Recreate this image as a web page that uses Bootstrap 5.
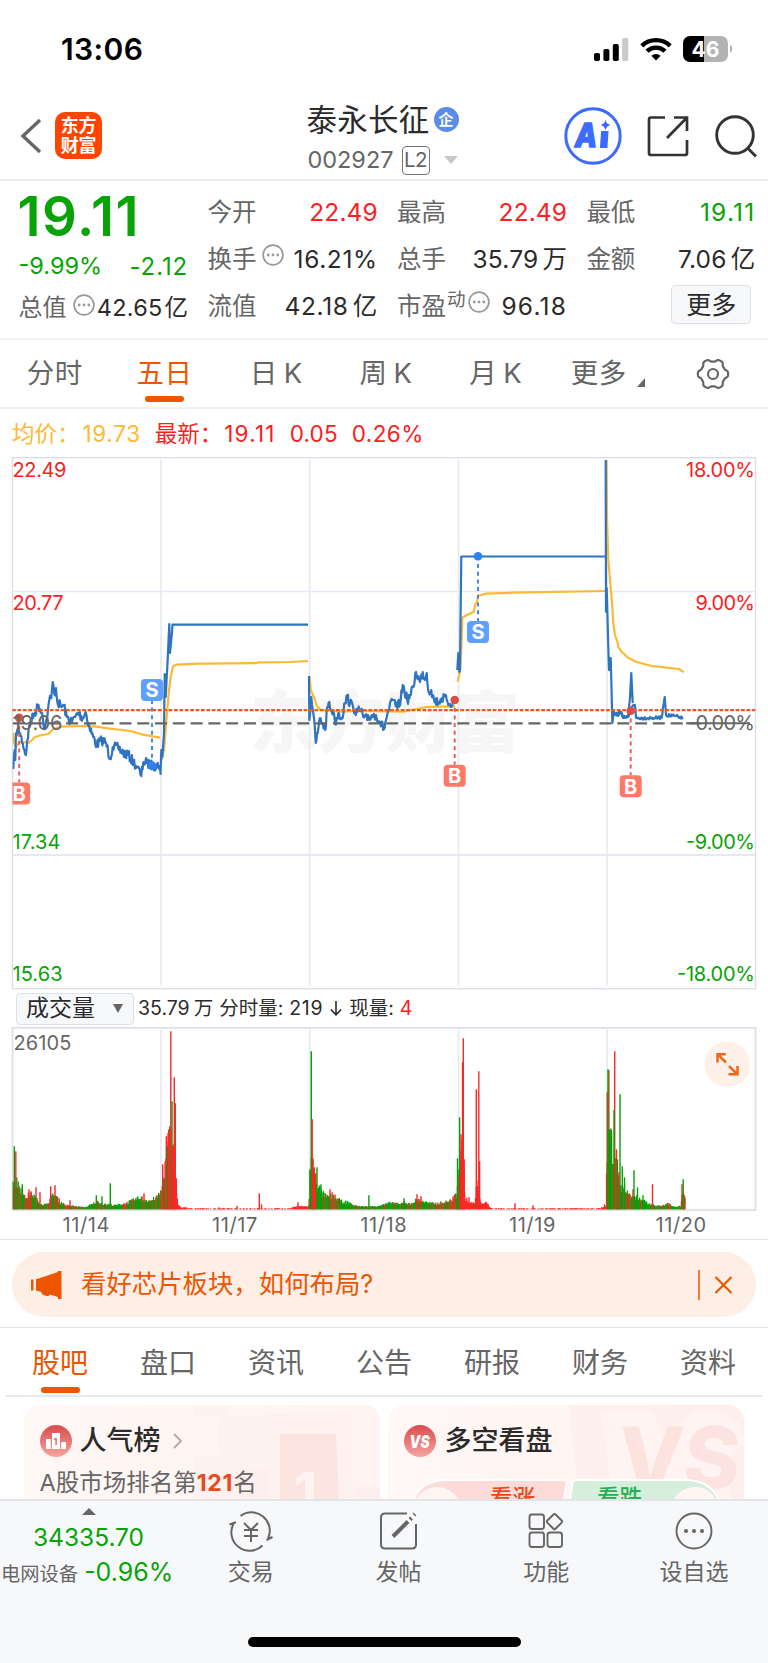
<!DOCTYPE html>
<html lang="zh-CN">
<head>
<meta charset="utf-8">
<meta name="viewport" content="width=device-width, initial-scale=1">
<title>泰永长征 002927</title>
<link href="https://cdn.jsdelivr.net/npm/bootstrap@5.3.0/dist/css/bootstrap.min.css" rel="stylesheet">
<style>
:root{--up:#fb2022;--down:#07a307;--brand:#ee5500;--ink:#2b2b2b;--dim:#666;--rule:#e7e8ee}
body{font-family:Inter,"Noto Sans CJK SC",sans-serif;color:var(--ink);background:#fff;line-height:1.2}
.app{width:768px;height:1663px;overflow:hidden}
.app svg{display:block;flex:none}
.up{color:var(--up)}.down{color:var(--down)}.dim{color:var(--dim)}.brand{color:var(--brand)}
.ls-2{letter-spacing:.2px!important}.ls-6{letter-spacing:.65px!important}.ls-12{letter-spacing:1.2px!important}
.status{height:98px;padding:0 34px 0 61px}
.clock{font-size:30px;font-weight:600;letter-spacing:.4px;color:#000}
.topbar{height:83px;padding:0 11px 6px 20px;border-bottom:2px solid #ededef}
.side{width:238px}
.logo{width:47px;height:47px;border-radius:10px;background:#ff4400;color:#fff;font-size:18px;font-weight:700;line-height:19.5px;letter-spacing:-.3px}
.stock{margin-left:-12px;padding-top:5px}
.title{font-size:30.5px;letter-spacing:.3px;line-height:36px}
.qi{width:25px;height:25px;background:#5b8cea;color:#fff;font-size:15px;font-weight:700}
.code{font-size:23.5px;letter-spacing:0}
.lv{width:28px;height:29px;border:1.5px solid #777;border-radius:4px;font-size:20.5px;letter-spacing:-.5px}
.quote{display:grid;grid-template-columns:169.6px 170.4px 170px 169px;column-gap:19.3px;padding:8px 0 0 18.5px;height:159px;border-bottom:2px solid #f2f2f4}
.qrow{height:47.2px;font-size:24.5px;white-space:nowrap}
.qrow .v{letter-spacing:.1px}
.big{font-size:54.5px;font-weight:600;height:56px;letter-spacing:1.5px;margin-left:-1px}
.more{width:80px;height:39px;border:1.5px solid #dfe1e8;border-radius:4px;background:#f7f8fa;font-size:25px}
.tabs{height:69px;border-bottom:2px solid #f2f2f4;font-size:27.5px;letter-spacing:.5px}
.tabs>div{width:14.2857%}
.subtabs>div{flex:1 1 0}
.tabs .kline{padding-left:4px}
.tabs .kline span{margin-left:6px}
.bar-u{width:39px;height:6px;border-radius:3px;background:var(--brand);left:50%;margin-left:-19.5px}
.legend{height:48px;padding-left:12px;font-size:22.5px}
.tools{height:37px;padding-left:16px;font-size:19.5px}
.pick{width:118px;height:32px;border:1.5px solid #dfe1e8;border-radius:4px;background:#f7f8fa;font-size:23px;padding:0 10px 0 9px}
.dates{height:28px;margin-left:12px;width:744px;font-size:20px;letter-spacing:.6px}
.dates div{width:148.7px;text-align:center}
.notice{height:65px;margin:12px 12px 10px;border-radius:33px;background:#fdeee6;color:var(--brand);font-size:25.4px;padding:0 24px 0 19px}
.subtabs{height:69px;margin:0 6px;border-bottom:2px solid var(--rule);font-size:28px}
.subtabs>div{padding-top:5px}
.panels{height:102px;padding:8px 24px 0;gap:8px;overflow:hidden}
.panel{flex:1 1 0;height:120px;border-radius:16px;background:linear-gradient(100deg,#fff8f6,#fff2f0);overflow:hidden;padding:20px 15.5px}
.panel .hd{font-size:27px;font-weight:500;line-height:32px}
.panel .deco{right:0;top:0}
.rank{font-size:23.5px;margin-top:12px;line-height:28px;white-space:nowrap}
.dock{height:165px;background:#f7f8fa;border-top:2px solid #e3e4e7}
.dock .item{width:147.7px;padding-top:9px;font-size:23px}
.index{width:177px;padding-top:7px}
.home{width:273px;height:10px;border-radius:5px;background:#000}
</style>
</head>
<body>
<div class="app">
  <div class="status d-flex justify-content-between align-items-center">
    <div class="clock">13:06</div>
    <div class="d-flex align-items-center" style="gap:11px">
      <svg width="35" height="23" viewBox="0 0 35 23"><g><rect x="0" y="15" width="6" height="8" rx="1.8"/><rect x="9.4" y="11" width="6" height="12" rx="1.8"/><rect x="18.8" y="6" width="6" height="17" rx="1.8"/><rect x="28.2" y="0" width="6" height="23" rx="1.8" fill="#c9c9c9"/></g></svg>
      <svg width="32" height="24" viewBox="0 0 32 24" fill="none" stroke="#000" stroke-width="4.4"><path d="M1.8 8.8a20.5 20.5 0 0 1 28.4 0"/><path d="M7 14.2a13 13 0 0 1 18 0"/><path d="M16 23.5l-4.6-4.7a6.5 6.5 0 0 1 9.2 0z" fill="#000" stroke="none"/></svg>
      <svg width="51" height="26" viewBox="0 0 51 26"><path d="M7 0h14v26H7a7 7 0 0 1-7-7V7a7 7 0 0 1 7-7z"/><path d="M21 0h17a7 7 0 0 1 7 7v12a7 7 0 0 1-7 7H21z" fill="#b3b3b3"/><path d="M47 9c3 1.500 3 6.500 0 8z" fill="#b3b3b3"/><text x="22.500" y="20.500" text-anchor="middle" font-size="21" font-weight="700" fill="#fff" textLength="28">46</text></svg>
    </div>
  </div>

  <div class="topbar d-flex justify-content-between align-items-center">
    <div class="side d-flex align-items-center">
      <svg width="22" height="36" viewBox="0 0 22 36" fill="none" stroke="#666" stroke-width="3.4"><path d="M20 2L3 18l17 16"/></svg>
      <div class="logo d-flex align-items-center justify-content-center text-center" style="margin-left:13px">东方<br>财富</div>
    </div>
    <div class="text-center stock">
      <div class="d-flex align-items-center justify-content-center" style="gap:4px"><span class="title">泰永长征</span><span class="qi rounded-circle d-flex align-items-center justify-content-center">企</span></div>
      <div class="d-flex align-items-center dim" style="margin:8px 0 0 1px"><span class="code">002927</span><span class="lv d-flex align-items-center justify-content-center" style="margin:0 14px 0 8px">L2</span><svg width="14" height="8"><path d="M0 0h14L7 8z" fill="#c8c8c8"/></svg></div>
    </div>
    <div class="side d-flex align-items-center justify-content-end">
      <svg width="58" height="58" viewBox="0 0 58 58"><circle cx="29" cy="29" r="27.200" fill="#fff" stroke="#3d6bff" stroke-width="3"/><text x="11" y="40" font-size="33" font-weight="800" font-style="italic" fill="#3d6bff" stroke="#3d6bff" stroke-width="1.600" textLength="22" lengthAdjust="spacingAndGlyphs">A</text><path d="M38 25h5.500l-1 15H37z" fill="#3d6bff" stroke="#3d6bff" stroke-width="2"/><path d="M41.500 12.500q.8 4.700 5 5.500-4.200.8-5 5.500-.8-4.700-5-5.500 4.200-.8 5-5.500z" fill="#3d6bff"/></svg>
      <svg width="42" height="42" viewBox="0 0 42 42" fill="none" stroke="#333" stroke-width="2.700" style="margin:0 26px 0 25px"><path d="M18 2.500H4q-2 0-2 2V38q0 2 2 2h34q2 0 2-2V25M27 2.500h13V16M40 2.500L20 23"/></svg>
      <svg width="42" height="44" viewBox="0 0 42 44" fill="none" stroke="#333" stroke-width="2.900"><circle cx="20" cy="21" r="18.300"/><path d="M33 34.500l8 8"/></svg>
    </div>
  </div>

  <div class="quote">
    <div>
      <div class="big down d-flex align-items-center">19.11</div>
      <div class="down d-flex justify-content-between" style="font-size:24px;height:43.500px;line-height:42px"><span style="font-size:23.500px">-9.99%</span><span style="padding-top:1px;letter-spacing:.900px">-2.12</span></div>
      <div class="d-flex align-items-center" style="height:40px;font-size:23.500px;white-space:nowrap"><span class="dim" style="font-size:24px">总值</span><svg width="22" height="22" viewBox="0 0 22 22" style="margin:-7px 2px 0 6px"><use href="#dots"/></svg><span class="ms-auto ls-2">42.65<span style="margin-left:2px">亿</span></span></div>
    </div>
    <div>
      <div class="qrow d-flex align-items-center justify-content-between"><span class="dim">今开</span><span class="v up">22.49</span></div>
      <div class="qrow d-flex align-items-center"><span class="dim">换手</span><svg width="22" height="22" style="margin:-10px 0 0 6px" viewBox="0 0 22 22"><use href="#dots"/></svg><span class="v ls-6 ms-auto">16.21%</span></div>
      <div class="qrow d-flex align-items-center justify-content-between"><span class="dim">流值</span><span class="v ls-6">42.18<span style="margin-left:4px">亿</span></span></div>
    </div>
    <div>
      <div class="qrow d-flex align-items-center justify-content-between"><span class="dim">最高</span><span class="v up">22.49</span></div>
      <div class="qrow d-flex align-items-center justify-content-between"><span class="dim">总手</span><span class="v ls-2">35.79<span style="margin-left:4px">万</span></span></div>
      <div class="qrow d-flex align-items-center"><span class="dim">市盈</span><span class="dim" style="font-size:18.500px;margin:-16px 1px 0 1px">动</span><svg width="22" height="22" style="margin:-10px 0 0 1px" viewBox="0 0 22 22"><use href="#dots"/></svg><span class="v ls-12 ms-auto">96.18</span></div>
    </div>
    <div>
      <div class="qrow d-flex align-items-center justify-content-between"><span class="dim">最低</span><span class="v ls-12 down">19.11</span></div>
      <div class="qrow d-flex align-items-center justify-content-between"><span class="dim">金额</span><span class="v ls-2">7.06<span style="margin-left:4px">亿</span></span></div>
      <div class="qrow d-flex align-items-center justify-content-end"><div class="more d-flex align-items-center justify-content-center" style="margin:-4px 4px 0 0">更多</div></div>
    </div>
  </div>

  <div class="tabs d-flex align-items-center dim">
    <div class="text-center">分时</div>
    <div class="text-center brand position-relative h-100 d-flex align-items-center justify-content-center">五日<span class="bar-u position-absolute" style="bottom:5px"></span></div>
    <div class="text-center kline">日<span>K</span></div>
    <div class="text-center kline">周<span>K</span></div>
    <div class="text-center kline">月<span>K</span></div>
    <div class="d-flex justify-content-center align-items-end" style="padding-left:9px">更多<svg width="8" height="9" style="margin:0 0 3px 10px"><path d="M8 0v9H0z" fill="#666"/></svg></div>
    <div class="d-flex justify-content-center"><svg width="34" height="32" viewBox="-17 -16 34 32" fill="none" stroke="#666" stroke-width="2.200"><path id="gear"/><circle r="5"/></svg></div>
  </div>

  <div class="legend d-flex align-items-center"><span style="color:#fdb933">均价：</span><span class="ls-6" style="color:#fdb933;margin-left:3px">19.73</span><span class="up" style="margin-left:14px">最新：</span><span class="up ls-12" style="margin-left:2px">19.11</span><span class="up ls-2" style="margin-left:14px">0.05</span><span class="up" style="margin-left:14px;letter-spacing:.4px">0.26%</span></div>

  <svg id="price" width="768" height="533" viewBox="0 457 768 533" font-size="20">
    <defs>
      <g id="dots" fill="none"><circle cx="11" cy="11" r="9.900" stroke="#999" stroke-width="1.700"/><g fill="#999"><circle cx="6.200" cy="11" r="1.400"/><circle cx="11" cy="11" r="1.400"/><circle cx="15.800" cy="11" r="1.400"/></g></g>
      <clipPath id="clip"><rect x="12.500" y="457" width="743" height="532"/></clipPath>
    </defs>
    <text x="250" y="747" font-size="67" font-weight="900" fill="#f6f6f6" textLength="270">东方财富</text>
    <g stroke="#e6e9f1" stroke-width="1.600"><path d="M161 460V986M309.700 460V986M458.500 460V986M607.200 460V986M12 591.500H756"/><path d="M12 855H756" stroke-width="2"/></g>
    <rect x="12.500" y="457.700" width="743" height="531" fill="none" stroke="#dcdee6" stroke-width="1.400"/>
    <g fill="#fb2022"><text x="12.500" y="477" textLength="54">22.49</text><text x="12.500" y="609.500" textLength="51">20.77</text><text x="755" y="477" text-anchor="end" textLength="69">18.00%</text><text x="755" y="609.500" text-anchor="end" textLength="59.500">9.00%</text></g>
    <g fill="#07a307"><text x="12.500" y="849" textLength="48">17.34</text><text x="12.500" y="981" textLength="50">15.63</text><text x="755" y="849" text-anchor="end" textLength="69">-9.00%</text><text x="755" y="981" text-anchor="end" textLength="78">-18.00%</text></g>
    <g clip-path="url(#clip)">
      <g id="avg" fill="none" stroke="#fdb933" stroke-width="2.200" stroke-linejoin="round"></g>
      <g id="line" fill="none" stroke="#2f74c0" stroke-width="2.200" stroke-linejoin="round"></g>
      <path d="M12 710.200H756" stroke="#ee5a1c" stroke-width="2.200" stroke-dasharray="3.800 1.600"/>
      <path d="M12.800 723.300H704" stroke="#666" stroke-width="2.300" stroke-dasharray="12 5.780"/><path d="M686 723.300H750" stroke="#666" stroke-width="2"/>
      <g id="marks"></g>
    </g>
    <g fill="#666"><text x="12.500" y="729.500" textLength="50">19.06</text><text x="755" y="729.500" text-anchor="end" textLength="59.500">0.00%</text></g>
  </svg>

  <div class="tools d-flex align-items-center"><div class="pick d-flex align-items-center justify-content-between">成交量<svg width="10" height="9"><path d="M0 0h10L5 9z" fill="#666"/></svg></div><div class="d-flex align-items-center" style="padding-top:1px"><span style="margin-left:4px">35.79<span style="margin-left:4px">万</span></span><span style="margin-left:6px">分时量:</span><span class="ls-6" style="margin-left:6px">219</span><svg width="12" height="15" viewBox="0 0 12 15" fill="none" stroke="#2b2b2b" stroke-width="1.600" style="margin:0 7px"><path d="M6 0v13.500M.8 8.500L6 13.800l5.200-5.300"/></svg><span>现量:</span><span class="up" style="margin-left:6px">4</span></div></div>

  <svg id="vol" width="768" height="184" viewBox="0 1026.500 768 184">
    <path d="M161 1029V1209M309.700 1029V1209M458.500 1029V1209M607.200 1029V1209" stroke="#e6e9f1" stroke-width="1.600"/>
    <rect x="12.500" y="1027.300" width="743" height="182.300" fill="none" stroke="#dcdee6" stroke-width="1.600"/>
    <text x="13.500" y="1049" font-size="20" fill="#666" textLength="58">26105</text>
    <g id="bars"></g>
    <circle cx="727.300" cy="1063.700" r="22.700" fill="#fdf1ea"/>
    <path d="M717.500 1062v-8.300h8.300M717.500 1053.700l8.500 8.300M737.500 1065.500v8.300h-9M737.500 1073.800l-8.500-8.300" fill="none" stroke="#f0661b" stroke-width="2.500"/>
  </svg>
  <div class="dates d-flex align-items-center dim"><div>11/14</div><div>11/17</div><div>11/18</div><div>11/19</div><div>11/20</div></div>
  <div style="border-top:1px solid #e2e4ea"></div>

  <div class="notice d-flex align-items-center">
    <svg width="31" height="28" viewBox="0 0 31 28" fill="#ee5500"><path d="M0 8.500h2.500v11H0zM5 8l2-.3L27 1V0h3.500v28H27v-2l-8-2.500q-1 2-3.500 1.500l-4-1.500-1.500-2.700L5 19.500z"/></svg>
    <span style="margin-left:19px">看好芯片板块，如何布局?</span>
    <svg class="ms-auto" width="34" height="30" viewBox="0 0 34 30" stroke="#ee5500" fill="none"><path d="M1 0v30" stroke-width="1.500"/><path d="M17.500 7l16 16M33.500 7l-16 16" stroke-width="2.200"/></svg>
  </div>
  <div style="border-top:1px solid #e2e4ea"></div>
  <div class="subtabs d-flex align-items-center text-center dim">
    <div class="position-relative h-100 d-flex align-items-center justify-content-center brand">股吧<span class="bar-u position-absolute" style="bottom:2px"></span></div><div>盘口</div><div>资讯</div><div>公告</div><div>研报</div><div>财务</div><div>资料</div>
  </div>

  <div class="panels d-flex">
    <div class="panel position-relative">
      <svg class="deco position-absolute" width="190" height="96" viewBox="0 0 190 96"><g fill="#fceeec"><path d="M4 0h186v96H4z" opacity=".35"/><path d="M52 65h28v31H52zM166 82h24v14h-24z" opacity=".9"/></g><path d="M38 0h38l-2 10H29v40H4V12h34zM74 9h88v73h28V0H74z" fill="#fff5f3" opacity=".8"/><path d="M90 29h56l3 67H90z" fill="#fce4e1"/><text x="104" y="105" font-size="52" font-weight="800" fill="#fff3f1">1</text></svg>
      <div class="hd d-flex align-items-center position-relative"><svg width="32" height="32" viewBox="0 0 32 32"><defs><linearGradient id="rd" x2="0" y2="1"><stop stop-color="#d94b4c"/><stop offset="1" stop-color="#f6a5a0"/></linearGradient></defs><circle cx="16" cy="16" r="16" fill="url(#rd)"/><path d="M12 8h8v16h-8zM6 14h4.800v10H6zM21.200 17H26v7h-4.800z" fill="#fff"/><text x="13.500" y="19.500" font-size="9" font-weight="700" fill="#e0605e">1</text></svg><span style="margin-left:8px">人气榜</span><svg width="9" height="16" viewBox="0 0 9 16" fill="none" stroke="#aaa" stroke-width="1.800" style="margin-left:12px"><path d="M1 1l7 7-7 7"/></svg></div>
      <div class="rank dim position-relative">A股市场排名第<b style="color:#e8491d;letter-spacing:.700px;font-size:23px">121</b>名</div>
    </div>
    <div class="panel position-relative">
      <svg class="deco position-absolute" width="176" height="96" viewBox="0 0 176 96"><path d="M0 0h176v96H12z" fill="#fdecea" opacity=".6"/><path d="M33 6h50l14 24 30-24q50-2 49 32l-20 22 8 36H45z" fill="#fff5f3" opacity=".75"/><text x="46" y="84" font-size="86" font-weight="800" fill="#fce3e0" textLength="122" lengthAdjust="spacingAndGlyphs" transform="translate(8 0) skewX(-4)">VS</text></svg>
      <div class="hd d-flex align-items-center position-relative"><svg width="32" height="32" viewBox="0 0 32 32"><circle cx="16" cy="16" r="16" fill="url(#rd)"/><text x="15.500" y="22.500" font-size="18" font-weight="900" font-style="italic" fill="#fff" text-anchor="middle" textLength="20" lengthAdjust="spacingAndGlyphs">VS</text></svg><span style="margin-left:9px">多空看盘</span></div>
      <svg class="position-relative" style="margin:21px 0 0 3px" width="318" height="50" viewBox="0 0 318 50"><path d="M0 60C0 20 12 2 40 2H160L151 60z" fill="#fddbd9" stroke="#fff" stroke-width="2"/><path d="M318 60C318 20 306 2 278 2H166L157 60z" fill="#d6efdc" stroke="#fff" stroke-width="2"/><circle cx="30" cy="33" r="24" fill="#fff6f4"/><circle cx="288" cy="33" r="24" fill="#fff6f4"/><text x="83" y="28" font-size="22.500" font-weight="500" fill="#ea4a20">看涨</text><text x="190" y="28" font-size="22.500" font-weight="500" fill="#27ae55">看跌</text></svg>
    </div>
  </div>

  <div class="dock d-flex flex-column align-items-center">
    <div class="d-flex w-100 text-center dim">
      <div class="index"><svg class="mx-auto" width="14" height="7"><path d="M7 0l7 7H0z" fill="#666"/></svg>
        <div class="down" style="font-size:24.500px;line-height:30px;margin-top:7px">34335.70</div>
        <div class="text-start" style="padding-left:1px;margin-top:5px;font-size:19.300px;white-space:nowrap;line-height:30px">电网设备<span class="down" style="font-size:25px;margin-left:6px">-0.96%</span></div>
      </div>
      <div class="item"><svg class="mx-auto" width="44" height="42" viewBox="-22 -21 44 42" fill="none" stroke="#666" stroke-width="2"><path d="M-10.500-15A18.300 18.300 0 0 1 17 7.500M21.500 6L15.500 9M11.500 14.500A18.300 18.300 0 0 1-17.300-7.500M-21.500-6.500L-15-8.800M-7-8l7 7 7-7M0-1v12M-7-1H7M-7 5H7"/></svg><div style="margin-top:7px">交易</div></div>
      <div class="item"><svg class="mx-auto" width="42" height="42" viewBox="0 0 42 42" fill="none" stroke="#666" stroke-width="2"><path d="M29 3.500H7q-4 0-4 4v27q0 4 4 4h27q4 0 4-4V14"/><path d="M15 26.500L30 11.500M32 9.500L33.500 8M36 5l1-1" stroke-width="4"/></svg><div style="margin-top:7px">发帖</div></div>
      <div class="item"><svg class="mx-auto" width="42" height="42" viewBox="0 0 42 42" fill="none" stroke="#666" stroke-width="1.900"><rect x="4.500" y="4.500" width="14.500" height="14.500" rx="2.500"/><rect x="4.500" y="22.500" width="14.500" height="14.500" rx="2.500"/><rect x="22.500" y="22.500" width="14.500" height="14.500" rx="2.500"/><rect x="23.700" y="5.800" width="11.600" height="11.600" rx="1.500" transform="rotate(45 29.500 11.600)"/></svg><div style="margin-top:7px">功能</div></div>
      <div class="item"><svg class="mx-auto" width="42" height="42" viewBox="0 0 42 42" fill="none" stroke="#666" stroke-width="1.900"><circle cx="21" cy="21" r="17.500"/><g fill="#666" stroke="none"><circle cx="13" cy="21" r="2.100"/><circle cx="21" cy="21" r="2.100"/><circle cx="29" cy="21" r="2.100"/></g></svg><div style="margin-top:7px">设自选</div></div>
    </div>
    <div class="home mt-auto" style="margin-bottom:17px"></div>
  </div>
</div>
<script src="https://cdn.jsdelivr.net/npm/bootstrap@5.3.0/dist/js/bootstrap.bundle.min.js"></script>
<script>
let seed = 7;
const rnd = () => (seed = (seed * 16807) % 2147483647) / 2147483647;
const $ = id => document.getElementById(id);
const parse = s => s.trim().split(/\s+/).map(p => p.split(',').map(Number));

// Intraday price: anchors with tick jitter between them
function ticks(s, amp) {
  const a = parse(s), out = [a[0]];
  for (let i = 1; i < a.length; i++) {
    const [x0, y0] = a[i - 1], [x1, y1] = a[i], n = Math.max(1, Math.round((x1 - x0) / .75));
    for (let k = 1; k < n; k++) out.push([x0 + (x1 - x0) * k / n, y0 + (y1 - y0) * k / n + (rnd() - .5) * 2 * amp]);
    out.push(a[i]);
  }
  return out;
}
const poly = p => `<polyline points="${p.map(q => q[0].toFixed(1) + ',' + q[1].toFixed(1)).join(' ')}"/>`;
const lines = [
  ["13.3,769 14.7,750 15.3,760 16,733 17.3,730 20,733 22.7,743 25.8,755 27.3,740 30,723 34.7,713 38.5,705 40,709 42,713 45,729 47.7,713 49.3,700 51.3,698 52.7,682 54.3,694 56,688 57.3,702 61.7,707 64,705 66.7,717 71.7,722 75,717 78.3,713 82.7,718 85.7,712 89.3,727 93.3,737 96.7,745 101.7,740 106,743 110,758 112.7,747 118.3,748 123.3,753 128.3,755 133.3,762 137.3,767 141.3,776 143.3,762 146.7,763 153,766 160,765", 5],
  ["160,765 160.5,774 161.3,750 162.3,757 164,733 164.7,674 165.7,697 167.3,667 169.3,624 170,653 172,632 172.5,624.7 308,624.7", 0],
  ["309,676 309.3,720 311.3,697 313.3,713 315.7,743 317.7,733 319.3,720 322.7,723 325.3,730 327.3,707 329.3,702 331,710 333.3,712 335,723 338.3,713 341.7,718 345,703 347.3,697 350,703 353.3,708 357.3,712 360.7,710 363.3,717 367.3,720 371.7,715 376,715 380,722 384,729 386,720 389.3,708 393.3,700 397.3,708 400.7,700 402.7,685 407.3,700 410.7,695 413.3,687 416,672 420,682 422.7,672 425,680 426.7,673 428.7,692 431.3,690 434,700 438.3,702 442,698 446.7,700 450,704 453,702", 5],
  ["457.3,670 458.3,653 459.3,672 460,670 461.3,556.5 605,556.5", 0],
  ["605.7,460 606,611.7 606.7,588 608,636.7 609,670 610.7,658 611.3,680 612.3,723 614,711.7 616,715 618,716 621,711.7 623,718 628,717 630,698 631.3,673 632.7,703", 0],
  ["613,714 621,713 623,717 628,717 632.7,706 635,705 636,718 653,718 661.7,717.7 663,707 664.7,697 666,715 680,717 683,719", 1.6]
];
$('line').innerHTML = lines.map(([s, a]) => poly(ticks(s, a))).join('');
$('avg').innerHTML = [
  "13.3,733 14,742 16,747 19.3,742 29.3,742.7 35,737 41.7,735 48.3,734 53.3,729 60,726.7 83,726 96.7,726.7 110,728.7 123,730 133,731.7 141.7,734.3 160,737.7",
  "161.3,760.7 164,750 166.7,716.7 168.7,693 170.7,676.7 173,666.7 176,664.7 200,663.7 256.7,663.2 258.7,662.3 290,662 308,661",
  "309.7,677 310.7,690 314.3,698 316.7,705.7 320.7,710 343,711.7 356.7,711 403,711.7 416.7,709 426.7,707 455,706.3",
  "457.7,681.7 460,671 461.3,650 462.3,617.7 466.7,615 473.7,612 475.3,604 477,602.7 478,596 485,593.7 513,592.7 605,591",
  "606.5,460 607,517 608.3,560 610.3,583 612.3,607 613.3,623 615,635 617.7,643 618.3,647 621.7,651.7 628,657.7 636.7,662 651.7,666 666.7,667.7 679,669 681.7,671 683.7,672"
].map(s => poly(parse(s))).join('');

// Buy / sell markers: letter, x, box centre y, dot y
$('marks').innerHTML = [['S', 152, 690, 765.5], ['B', 19.2, 793.5, 717.7], ['B', 454.7, 775.7, 700], ['S', 478, 632, 556.3], ['B', 630.7, 786.3, 710.7]].map(([t, x, y, d]) => {
  const c = t === 'S' ? '#5ea0ff' : '#ff7868', l = t === 'S' ? '#3a87f5' : '#f0564e', e = y > d ? y - 11 : y + 11;
  return `<path d="M${x} ${d}V${e}" stroke="${l}" stroke-width="1.9" stroke-dasharray="4 3.7"/><circle cx="${x}" cy="${d}" r="4.3" fill="${t === 'S' ? '#2f80f0' : '#dc4e45'}"/><rect x="${x - 11}" y="${y - 11}" width="22" height="22" rx="4" fill="${c}"/><text x="${x}" y="${y + 7.2}" text-anchor="middle" font-size="20" font-weight="700" fill="#fff">${t}</text>`;
}).join('');

// Volume: envelope [x, height] plus individual peaks
const env = parse("13,28 17,28 20,24 24,12 28,14 33,15 38,8 42,5 47,5 51,12 55,15 60,8 66,4 85,2 92,5 97,8 105,5 110,5 115,4 125,6 133,9 140,12 145,10 150,9 156,11 161,18 164,32 167,62 170,75 173,62 175,50 176.5,20 178,4 182,2 190,1 290,1 296,3 302,3 307,3 309,4 310,48 312,50 315,32 318,24 321,18 324,15 328,12 333,15 338,10 342,8 348,7 354,4 362,3 375,3 385,5 392,7 400,5 404,8 410,5 417,10 421,9 430,6 436,6 443,7 448,8 453,10 457,16 459,40 461,60 463.5,50 465,12 469,7 475,6 477,30 480,8 487,6 490,2 495,1 600,1 606,3 607,60 610,78 613,56 615,50 618,35 620,25 624,22 627,18 632,12 637,13 643,9 648,6 655,4 662,3 668,7 673,3 681,3 682,20 684,14 685.5,8");
let html = '', j = 0;
const bar = (x, h, c, w) => `<path d="M${x.toFixed(1)} 1208.8v-${h.toFixed(1)}" stroke="${c}" stroke-width="${w}"/>`;
const R = '#fb2626', G = '#069e06';
for (let x = 13.2; x < 685.5; x += .72) {
  while (env[j + 1][0] < x) j++;
  const [x0, a] = env[j], [x1, b] = env[j + 1];
  const base = a + (b - a) * (x - x0) / (x1 - x0);
  const rally = (x > 161 && x < 309) || (x > 460 && x < 606.5);
  const quiet = base < 1.6;
  if (quiet && rnd() < .35) continue;
  const h = base * (quiet ? .5 + rnd() * .8 : .7 + rnd() * .5);
  html += bar(x, h, rally ? (rnd() < .06 && !quiet ? G : R) : (rnd() < .25 ? R : G), 1.3);
}
html += ("14.3,63,g 15.8,58,r 22.3,25,g 29,20,r 31,18,r 36,22,r 40,17,r 50.7,23,r 55,24,r 70,9,r 96.3,14,g 102,13,g 110.3,26,g 144,16,r 162.7,45,r 164,30,g 166.3,73,r 167.2,62,g 168.3,68,r 169.7,83,r 170.8,178,r 172,108,g 172.8,62,r 174.3,132,r 175.3,106,r 176.3,31,r 219,2,r 237,3.5,r 259.3,16,r 261.5,5,r 298,7,r 311.3,158,g 312.2,90,r 313,50,r 314.2,42,r 315.7,36,r 317,42,g 321,25,g 330,20,r 368.9,14,g 404,11,g 417,15,r 421,13,r 453,13,r 457.5,51,g 458.7,34,r 459.6,92,g 461,75,r 461.9,70,r 462.6,147,r 463.3,171,r 464.2,50,r 469,12,r 476.3,120,r 478.8,138,r 479.6,48,r 515,6,r 533,4,r 604.5,5,r 607.2,117,r 608.9,139,r 608,140,g 609.7,80,g 611.5,76,g 614.7,158,r 614,99,g 616.5,60,r 617.4,50,g 619,37,r 620,115,g 622.3,43,g 624.5,32,g 633,20,r 634,39,g 637.5,22,g 643,14,g 652.5,25,r 682,25,r 683.2,30,g 684.5,14,r").split(' ').map(s => s.split(',')).map(([x, h, c]) => bar(+x, +h, c === 'r' ? R : G, 1.4)).join('');
$('bars').innerHTML = html;

// Settings icon outline with six soft lobes
let d = '';
for (let a = 0; a <= 360; a += 4) {
  const t = a * Math.PI / 180, r = 13.8 + 1.4 * Math.tanh(2 * Math.cos(6 * t));
  d += (a ? 'L' : 'M') + (r * Math.cos(t)).toFixed(2) + ' ' + (r * Math.sin(t)).toFixed(2);
}
$('gear').setAttribute('d', d + 'z');
</script>
</body>
</html>
